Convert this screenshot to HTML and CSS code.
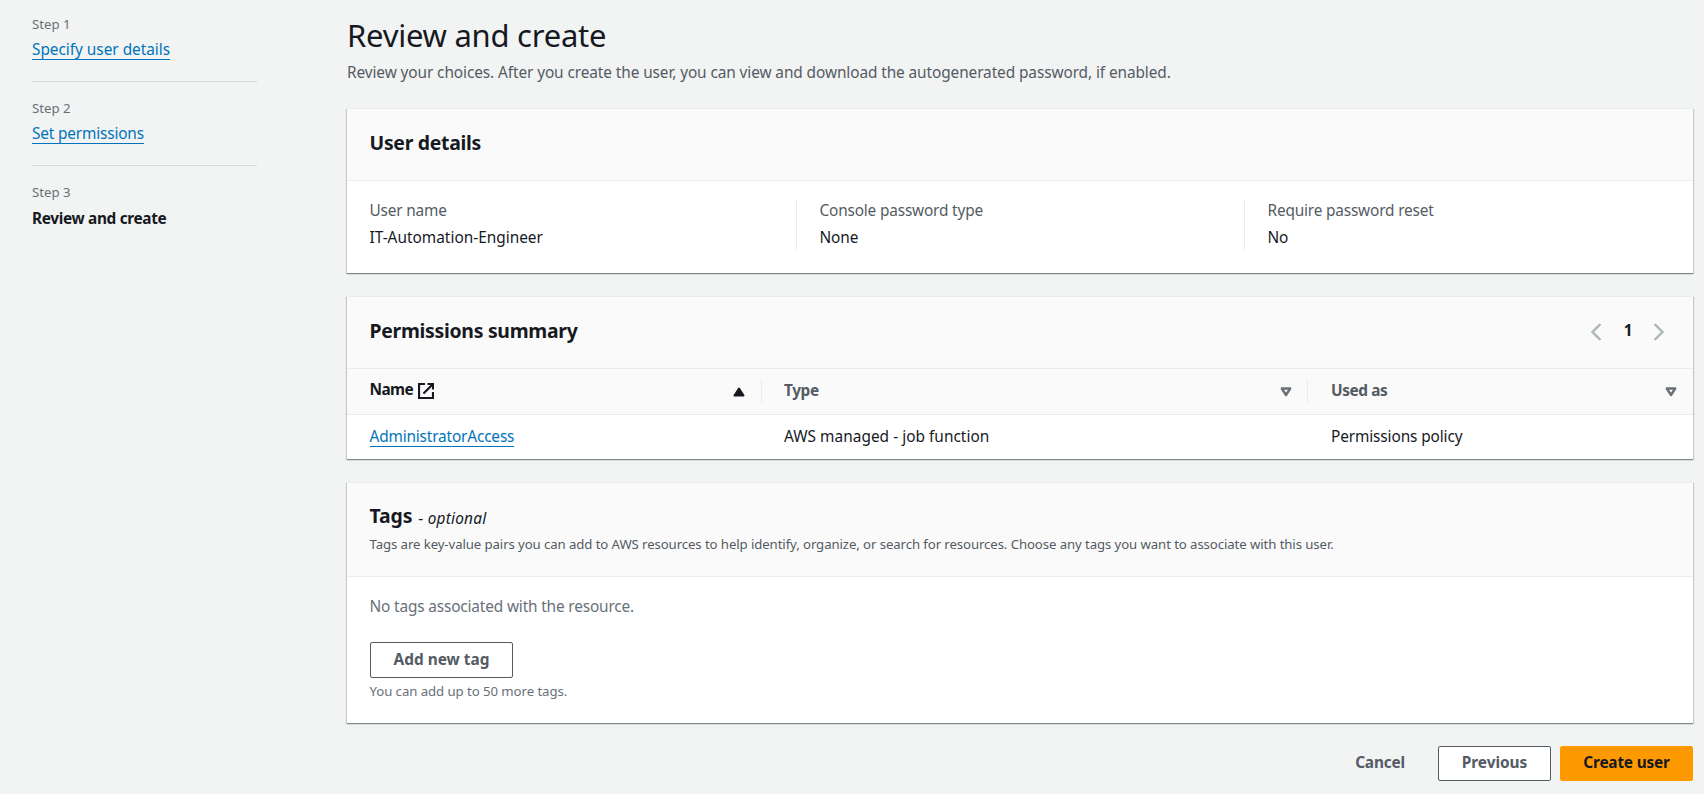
FILE: index.html
```html
<!DOCTYPE html>
<html lang="en">
<head>
<meta charset="utf-8">
<title>Create user</title>
<link rel="stylesheet" href="styles.css">
</head>
<body>
<div class="page">
  <nav class="steps">
    <div class="step">
      <div class="step-number">Step 1</div>
      <a class="link" href="#">Specify user details</a>
    </div>
    <div class="step">
      <div class="step-number">Step 2</div>
      <a class="link snug" href="#">Set permissions</a>
    </div>
    <div class="step current">
      <div class="step-number">Step 3</div>
      <div class="step-name">Review and create</div>
    </div>
  </nav>
  <main class="main">
    <h1 class="title">Review and create</h1>
    <p class="subtitle">Review your choices. After you create the user, you can view and download the autogenerated password, if enabled.</p>

    <section class="card">
      <header class="card-header"><h2 class="heading">User details</h2></header>
      <dl class="details">
        <div class="detail"><dt>User name</dt><dd class="wide">IT-Automation-Engineer</dd></div>
        <div class="detail"><dt>Console password type</dt><dd>None</dd></div>
        <div class="detail"><dt>Require password reset</dt><dd>No</dd></div>
      </dl>
    </section>

    <section class="card">
      <header class="card-header">
        <h2 class="heading">Permissions summary</h2>
        <div class="pagination">
          <svg class="chevron" viewBox="0 0 12 20"><path d="M10.500 2 2.500 10l8 8"/></svg>
          <span class="page-number">1</span>
          <svg class="chevron" viewBox="0 0 12 20"><path d="m1.500 2 8 8-8 8"/></svg>
        </div>
      </header>
      <div class="row head">
        <div class="cell sorted">
          <span class="name-label">Name
            <svg class="external" viewBox="0 0 16 16"><path d="M7 1H1v14h14V9M9.500 1H15v5.500M15 1 5.500 10.500"/></svg>
          </span>
          <svg class="sort" viewBox="0 0 12 10"><path class="filled" d="M6 1.500 10.500 8.500h-9z"/></svg>
        </div>
        <div class="cell">Type
          <svg class="sort" viewBox="0 0 12 10"><path d="M1.800 1.500h8.400L6 8z"/></svg>
        </div>
        <div class="cell">Used as
          <svg class="sort" viewBox="0 0 12 10"><path d="M1.800 1.500h8.400L6 8z"/></svg>
        </div>
      </div>
      <div class="row">
        <div class="cell"><a class="link snug" href="#">AdministratorAccess</a></div>
        <div class="cell function">AWS managed - job function</div>
        <div class="cell">Permissions policy</div>
      </div>
    </section>

    <section class="card">
      <header class="card-header tags-header">
        <h2 class="heading tags-heading">Tags <span class="optional">- <i>optional</i></span></h2>
        <p class="description">Tags are key-value pairs you can add to AWS resources to help identify, organize, or search for resources. Choose any tags you want to associate with this user.</p>
      </header>
      <div class="tags-body">
        <p class="empty">No tags associated with the resource.</p>
        <button class="button add-tag">Add new tag</button>
        <p class="hint">You can add up to 50 more tags.</p>
      </div>
    </section>

    <footer class="actions">
      <button class="button plain">Cancel</button>
      <button class="button previous">Previous</button>
      <button class="button primary">Create user</button>
    </footer>
  </main>
</div>
</body>
</html>
```
FILE: styles.css
```css
* { box-sizing: border-box; }

body {
  margin: 0;
  height: 794px;
  overflow: hidden;
  background: #f2f3f3;
  color: #16191f;
  font: 15.4px/24px "Noto Sans", "Open Sans", sans-serif;
  letter-spacing: -0.12px;
}

h1, h2, p, dl, dd { margin: 0; }

.page {
  display: grid;
  grid-template-columns: 226px 1346px;
  column-gap: 90px;
  padding-left: 31px;
}

/* Wizard steps */
.steps { padding: 14px 0 0 1px; }
.step {
  height: 68px;
  margin-bottom: 16px;
  border-bottom: 1px solid #d5dbdb;
}
.step.current { border: 0; }
.step-number {
  margin-bottom: 3px;
  color: #687078;
  font-size: 13.2px;
  line-height: 20px;
  letter-spacing: 0;
}
.step-name {
  padding-top: 2px;
  font-weight: 700;
  letter-spacing: -0.34px;
}
.link {
  display: inline-block;
  height: 23px;
  border-bottom: 1px solid #0073bb;
  color: #0073bb;
  line-height: 26px;
  letter-spacing: -0.03px;
  text-decoration: none;
  vertical-align: top;
}
.link.snug { letter-spacing: -0.17px; }

/* Page heading */
.title {
  margin-top: 15px;
  font-size: 31px;
  font-weight: 400;
  line-height: 40px;
  letter-spacing: -0.25px;
}
.subtitle {
  margin: 6px 0 23px;
  color: #545b64;
  letter-spacing: -0.095px;
}

/* Cards */
.card {
  margin-bottom: 23px;
  border-top: 1px solid #eaeded;
  background: #fff;
  box-shadow: 0 1px 1px 0 rgba(0, 28, 36, 0.3), 1px 1px 1px 0 rgba(0, 28, 36, 0.15), -1px 1px 1px 0 rgba(0, 28, 36, 0.15);
}
.card-header {
  display: flex;
  justify-content: space-between;
  height: 72px;
  padding: 20px 28px 0 22px;
  border-bottom: 1px solid #eaeded;
  background: #fafafa;
}
.heading {
  padding-left: 0.5px;
  font-size: 19.4px;
  font-weight: 700;
  line-height: 28px;
  letter-spacing: -0.28px;
}

.details {
  display: grid;
  grid-template-columns: 449px 448px 1fr;
  height: 92px;
  padding: 18px 0 22px;
}
.detail {
  padding: 1px 0 0 22.5px;
  border-left: 1px solid #eaeded;
  line-height: 22px;
}
.detail:first-child { border-left: 0; }
.detail dt { margin-bottom: 5px; color: #545b64; letter-spacing: -0.18px; }
.detail .wide { letter-spacing: 0; }

.pagination {
  display: flex;
  align-items: flex-start;
  padding-top: 5px;
}
.chevron {
  width: 12px;
  height: 20px;
  fill: none;
  stroke: #aab7b8;
  stroke-width: 2.4;
}
.page-number {
  width: 51px;
  margin-top: -3px;
  padding-left: 1px;
  font-weight: 700;
  text-align: center;
}

/* Table */
.row {
  display: grid;
  grid-template-columns: 415px 546px 1fr;
  height: 44px;
}
.cell {
  padding: 10px 0 0 22px;
}
.cell:first-child { padding: 9px 0 0 22.5px; }
.cell:last-child { padding-left: 23px; }
.function { letter-spacing: 0.03px; }
.row.head {
  height: 46px;
  border-bottom: 1px solid #eaeded;
  background: #fafafa;
}
.head .cell {
  display: flex;
  justify-content: space-between;
  height: 25px;
  margin-top: 10px;
  padding-top: 1px;
  padding-right: 15px;
  border-right: 1px solid #eaeded;
  color: #545b64;
  font-weight: 700;
  line-height: 22px;
  letter-spacing: -0.4px;
}
.head .cell:last-child { padding-right: 16px; border-right: 0; }
.head .cell.sorted {
  padding-right: 16px;
  color: #16191f;
  letter-spacing: -0.6px;
}
.name-label {
  display: flex;
  gap: 5.3px;
  margin-top: -1px;
}
.external {
  width: 16px;
  height: 16px;
  margin-top: 4px;
  fill: none;
  stroke: currentColor;
  stroke-width: 2.2;
}
.sort {
  width: 12px;
  height: 10px;
  margin-top: 7px;
  fill: none;
  stroke: #687078;
  stroke-width: 2.4;
  stroke-linejoin: round;
}
.sort .filled { fill: #16191f; stroke: #16191f; stroke-width: 2; }

/* Tags */
.tags-header {
  display: block;
  height: 94px;
  padding-top: 19px;
}
.tags-heading {
  height: 28px;
  letter-spacing: -0.1px;
}
.optional {
  position: relative;
  top: 1px;
  left: 1px;
  font-size: 15.4px;
  font-weight: 400;
  letter-spacing: 0.22px;
}
.description {
  margin-top: 4px;
  padding-left: 0.5px;
  color: #545b64;
  font-size: 13.2px;
  line-height: 20px;
  letter-spacing: -0.088px;
}
.tags-body {
  height: 146px;
  padding: 18px 22px 0 22.5px;
}
.empty { color: #687078; letter-spacing: -0.16px; }
.hint {
  margin-top: 3px;
  color: #687078;
  font-size: 13.2px;
  line-height: 20px;
  letter-spacing: -0.06px;
}

/* Buttons */
.button {
  display: block;
  height: 35px;
  padding: 0 0 2px;
  border: 1px solid #545b64;
  border-radius: 2px;
  background: #fff;
  color: #545b64;
  font: 700 15.4px/24px "Noto Sans", "Open Sans", sans-serif;
  letter-spacing: -0.2px;
}
.add-tag {
  width: 143px;
  height: 36px;
  margin: 23px 0 0 0.5px;
  padding: 0;
  letter-spacing: 0;
}
.actions {
  display: flex;
  justify-content: flex-end;
}
.plain {
  width: 116px;
  border-color: transparent;
  background: transparent;
}
.previous { width: 113px; letter-spacing: -0.05px; }
.primary {
  width: 133px;
  margin-left: 9px;
  border-color: #f90;
  background: #f90;
  color: #16191f;
}
```
